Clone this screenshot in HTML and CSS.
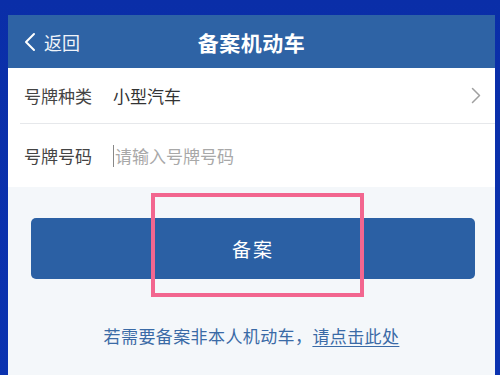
FILE: index.html
```html
<!DOCTYPE html>
<html lang="zh">
<head>
<meta charset="utf-8">
<link rel="stylesheet" href="styles.css">
</head>
<body>
<div class="phone">
  <header class="topbar">
    <div class="back">
      <svg class="back-icon" width="12" height="20" viewBox="0 0 12 20"><path d="M10 2 L2 10 L10 18" fill="none" stroke="#fff" stroke-width="2" stroke-linecap="round" stroke-linejoin="round"/></svg>
      <span>返回</span>
    </div>
    <div class="title">备案机动车</div>
  </header>
  <section class="form">
    <div class="row row-first">
      <span class="label">号牌种类</span>
      <span class="value">小型汽车</span>
      <svg class="arrow" width="10" height="17" viewBox="0 0 10 17"><path d="M1.5 1.5 L8.5 8.5 L1.5 15.5" fill="none" stroke="#a0a0a0" stroke-width="1.5" stroke-linecap="round" stroke-linejoin="round"/></svg>
    </div>
    <div class="row row-second">
      <span class="label">号牌号码</span>
      <span class="input"><span class="cursor"></span><span class="placeholder">请输入号牌号码</span></span>
    </div>
  </section>
  <div class="action">
    <button class="submit">备案</button>
    <div class="highlight"></div>
  </div>
  <p class="note">若需要备案非本人机动车，<span class="link">请点击此处</span></p>
</div>
</body>
</html>
```
FILE: styles.css
```css
html, body {
  margin: 0;
  padding: 0;
  height: 100%;
}
body {
  background: linear-gradient(180deg, #0a2ea8 0%, #0b33b0 100%);
  font-family: "Noto Sans CJK SC", "Noto Sans", sans-serif;
  overflow: hidden;
}
.phone {
  margin: 15px 5px 0 8px;
  height: 360px;
  background: #f4f7fa;
}
.topbar {
  height: 53px;
  background: #2e63a5;
  display: flex;
  align-items: center;
  position: relative;
  color: #fff;
}
.back {
  display: flex;
  align-items: center;
  padding-left: 16px;
  font-size: 18px;
  gap: 8px;
  color: #f0f4fa;
}
.title {
  position: absolute;
  left: 0;
  right: 0;
  text-align: center;
  font-size: 21px;
  font-weight: bold;
  pointer-events: none;
  letter-spacing: 0.5px;
}
.form {
  background: #fff;
}
.row {
  display: flex;
  align-items: center;
  padding-left: 16px;
  font-size: 17px;
}
.row-first {
  height: 55px;
  border-bottom: 1px solid #e6e8eb;
  margin-left: 12px;
  padding-left: 4px;
}
.row-second {
  height: 63px;
}
.label {
  color: #444;
  width: 89px;
}
.value {
  color: #333;
  flex: 1;
}
.arrow {
  margin-right: 14px;
}
.input {
  display: flex;
  align-items: center;
}
.cursor {
  width: 1px;
  height: 22px;
  background: #888;
  margin-right: 1px;
}
.placeholder {
  color: #a8a8a8;
}
.action {
  position: relative;
  padding: 31px 20px 0 23px;
}
.submit {
  display: block;
  width: 100%;
  height: 61px;
  border: none;
  border-radius: 5px;
  background: #2b60a4;
  color: #fff;
  font-family: inherit;
  font-size: 19px;
  letter-spacing: 2px;
}
.highlight {
  position: absolute;
  left: 143px;
  top: 6px;
  width: 205px;
  height: 96px;
  border: 4px solid #f2668f;
}
.note {
  margin: 44px 0 0;
  text-align: center;
  font-size: 17px;
  letter-spacing: 0.4px;
  color: #3a6aa6;
}
.link {
  text-decoration: underline;
  text-underline-offset: 3px;
}
```
